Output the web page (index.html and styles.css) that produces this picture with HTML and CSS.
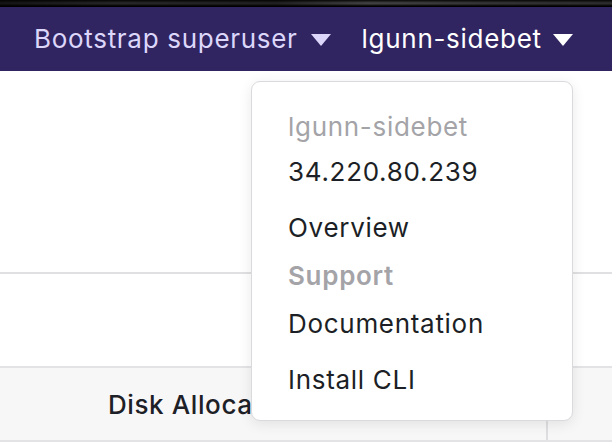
FILE: index.html
```html
<!DOCTYPE html>
<html>
<head>
<meta charset="utf-8">
<link rel="stylesheet" href="styles.css">
</head>
<body>
<div class="photo-edge"></div>
<nav class="navbar">
  <div class="nav-item nav-item--muted">
    <span>Bootstrap superuser</span>
    <svg class="caret" width="20" height="12" viewBox="0 0 20 12"><path d="M0 0 H20 L10 12 Z" fill="currentColor"/></svg>
  </div>
  <div class="nav-item nav-item--active">
    <span>lgunn-sidebet</span>
    <svg class="caret" width="20" height="12" viewBox="0 0 20 12"><path d="M0 0 H20 L10 12 Z" fill="currentColor"/></svg>
  </div>
</nav>
<main class="content">
  <section class="panel"></section>
  <section class="spacer"></section>
  <div class="table-head">
    <div class="th th--main">Disk Allocation</div>
    <div class="th th--rest"></div>
  </div>
</main>
<div class="dropdown">
  <div class="dd-header">lgunn-sidebet</div>
  <div class="dd-meta">34.220.80.239</div>
  <div class="dd-item">Overview</div>
  <div class="dd-header dd-header--bold">Support</div>
  <div class="dd-item">Documentation</div>
  <div class="dd-item">Install CLI</div>
</div>
</body>
</html>
```

FILE: styles.css
```css
html, body {
  margin: 0;
  padding: 0;
  background: #ffffff;
  font-family: Inter, "Noto Sans", "Liberation Sans", sans-serif;
  overflow: hidden;
}

.photo-edge {
  height: 7px;
  background:
    linear-gradient(to bottom, rgba(0,0,0,0.9) 0, rgba(0,0,0,0.2) 3px, rgba(0,0,0,0.3) 4px, rgba(0,0,0,1) 6px),
    linear-gradient(to right, #1a1a1a 0, #333 20%, #2a2a2a 45%, #555 60%, #444 80%, #3a3a3a 100%);
}

.navbar {
  height: 64px;
  background: #312561;
  display: flex;
  align-items: center;
  padding-left: 34px;
  gap: 31px;
  box-sizing: border-box;
}

.nav-item {
  display: flex;
  align-items: center;
  gap: 13px;
  font-size: 26px;
  letter-spacing: 0.7px;
  line-height: 30px;
}

.nav-item--muted { color: #dcd7fa; }
.nav-item--active { color: #ffffff; gap: 11px; }

.caret { display: block; margin-top: 1px; }

.content {
  display: flex;
  flex-direction: column;
}

.panel {
  height: 201px;
  border-bottom: 2px solid #e0e0e2;
}

.spacer {
  height: 92px;
}

.table-head {
  display: flex;
  height: 72px;
  background: #f7f7f8;
  border-top: 2px solid #e3e3e6;
  border-bottom: 2px solid #e3e3e6;
}

.th {
  display: flex;
  align-items: center;
  font-size: 26px;
  letter-spacing: 0.6px;
  font-weight: 500;
  color: #1d2026;
}

.th--main {
  width: 548px;
  padding-left: 108px;
  box-sizing: border-box;
  border-right: 2px solid #dedee1;
  white-space: nowrap;
  overflow: hidden;
}

.th--rest { flex: 1; }

.dropdown {
  position: absolute;
  left: 251px;
  top: 81px;
  width: 322px;
  box-sizing: border-box;
  padding: 25px 0 12px;
  background: #ffffff;
  border: 1px solid #dadadd;
  border-radius: 9px;
  box-shadow: 0 3px 14px rgba(0, 0, 0, 0.09);
  font-size: 26px;
  letter-spacing: 0.7px;
  line-height: 32px;
  color: #1c1f25;
}

.dd-header {
  padding: 4px 36px;
  color: #a4a4a8;
}

.dd-header--bold { font-weight: 600; }

.dd-meta {
  padding: 9px 36px 12px;
}

.dd-item {
  padding: 12px 36px;
}
```
